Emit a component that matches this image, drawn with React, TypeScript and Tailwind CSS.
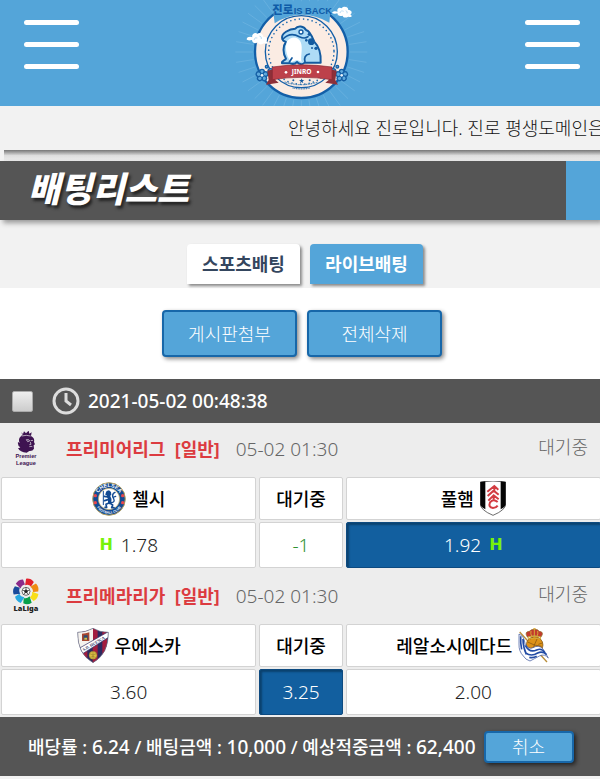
import React from "react";

const rays = Array.from({ length: 40 }, (_, i) => (i * Math.PI) / 20);

function MenuButton() {
  return (
    <button type="button" aria-label="메뉴" className="flex flex-col gap-[17px] mt-5 w-[55px]">
      <span className="w-full h-[5px] rounded-full bg-white" />
      <span className="w-full h-[5px] rounded-full bg-white" />
      <span className="w-full h-[5px] rounded-full bg-white" />
    </button>
  );
}

function Flower({ x, y }: { x: number; y: number }) {
  return (
    <g transform={`translate(${x} ${y})`} fill="#5fa9dc" stroke="#155fa5" strokeWidth="4">
      {[0, 72, 144, 216, 288].map((a) => (
        <circle key={a} cx="0" cy="-11" r="7" transform={`rotate(${a})`} />
      ))}
      <circle r="4" fill="#e8f3fb" stroke="none" />
    </g>
  );
}

function SiteLogo() {
  return (
    <svg width="140" height="106" viewBox="6 0 420 318" role="img" aria-label="진로 IS BACK">
      <g stroke="#8cc6ea" strokeWidth="2" opacity="0.5">
        {rays.map((a) => (
          <line
            key={a}
            x1={214 + Math.cos(a) * 145}
            y1={156 + Math.sin(a) * 145}
            x2={214 + Math.cos(a) * 198}
            y2={156 + Math.sin(a) * 198}
          />
        ))}
      </g>
      <circle cx="214" cy="155" r="139" fill="#fbece3" stroke="#135fa8" strokeWidth="7" />
      <circle cx="214" cy="155" r="108" fill="#fbece3" stroke="#135fa8" strokeWidth="4" />
      <circle cx="214" cy="155" r="98" fill="none" stroke="#1c68ae" strokeWidth="5" strokeLinecap="round" strokeDasharray="0 13" />
      <path d="M126 4h178l-6 64q-86-48-164 2z" fill="#54a5d9" />
      <text x="127" y="42" fontSize="34" fontWeight="900" fill="#0f5ca8" fontFamily="'Noto Sans CJK KR', sans-serif">
        진로
      </text>
      <text x="191" y="42" fontSize="28" fontWeight="bold" fill="#0f5ca8" fontFamily="'Liberation Sans', sans-serif">
        IS BACK
      </text>
      <path
        d="M157 118C150 100 180 86 196 86C203 76 222 78 228 90C238 92 246 108 252 124C262 134 274 154 272 188H224C216 196 206 192 201 186C196 192 186 192 180 190H156C154 182 166 182 168 176C158 160 158 138 168 126C162 124 158 122 157 118Z"
        fill="#aedcf6"
        stroke="#135a9f"
        strokeWidth="6"
        strokeLinejoin="round"
      />
      <path d="M171 124C184 106 206 110 212 126C220 146 210 172 215 186L201 180L184 186C174 178 162 150 171 124Z" fill="#fff" />
      <path
        d="M159 117C176 99 194 102 208 110C218 115 228 115 234 110M238 162C226 164 221 174 225 186M186 174L178 186"
        fill="none"
        stroke="#135a9f"
        strokeWidth="5"
        strokeLinecap="round"
      />
      <circle cx="213" cy="96" r="6" fill="#fff" stroke="#135a9f" strokeWidth="4" />
      <g fill="#135a9f">
        <circle cx="238" cy="103" r="5" />
        <circle cx="244" cy="125" r="10" />
        <circle cx="229" cy="121" r="4" />
        <circle cx="258" cy="145" r="5" />
        <circle cx="246" cy="144" r="3" />
      </g>
      <Flower x={96} y={226} />
      <Flower x={335} y={226} />
      <g fill="#5fa9dc" stroke="#155fa5" strokeWidth="4">
        <circle cx="122" cy="214" r="8" />
        <circle cx="309" cy="214" r="8" />
        <circle cx="110" cy="200" r="4" />
        <circle cx="322" cy="200" r="4" />
      </g>
      <path d="M112 212l24-6v34l10 8-38 6 8-14zM320 212l-24-6v34l-10 8 38 6-8-14z" fill="#8d3039" />
      <path d="M127 201q87-13 179 0v38q-92-14-179 0z" fill="#bd414b" stroke="#8a2733" strokeWidth="2" />
      <text x="215" y="223" textAnchor="middle" fontSize="20" fontWeight="bold" fill="#fff" fontFamily="'Noto Sans', sans-serif">
        JINRO
      </text>
      <circle cx="168" cy="217" r="4" fill="#fff" />
      <circle cx="264" cy="216" r="4" fill="#fff" />
      <path d="M215 235l2 5h6l-5 4 2 6-5-4-5 4 2-6-5-4h6z" fill="#135a9f" />
      <circle cx="190" cy="241" r="3" fill="#135a9f" />
      <circle cx="239" cy="241" r="3" fill="#135a9f" />
      <path d="M164 246q50 16 100 0M188 264q26 5 52 0" fill="none" stroke="#4b82b4" strokeWidth="4" strokeDasharray="3 2" />
      <g fill="#fff">
        <path d="M50 118c0-8 12-9 17-6-3-9 7-16 15-11 8-5 18 1 17 9 10-1 15 7 10 14 9 4 2 9-7 6-8 6-18 3-19-3-8 6-17 1-17-7-6 2-15 2-16-2z" />
        <path d="M306 38c5-6 12-5 17-3-4-8 5-16 12-10 6-8 20-5 20 5 9 0 14 8 6 14 8 4 4 9-6 6-8 5-16 3-17-3-9 3-16-1-16-7-6 2-13 1-16-2z" />
      </g>
      <path d="M72 120q2-10 10-6M88 108q8 1 6 9M330 39q2-9 11-5M347 32q7 2 4 8" fill="none" stroke="#9ccbed" strokeWidth="2" />
    </svg>
  );
}

function PremierLeagueLogo() {
  return (
    <svg width="22" height="36" viewBox="0 0 66 108" role="img" aria-label="Premier League">
      <path
        d="M18 4l6 5 3-8 6 6 8-8 2 9 7-4-2 11q12 6 9 18l3 7-4 3 1 10q-4 8-14 7l-8 5q-20-1-26-14 5 1 7-2-9-6-7-16l5 3q-6-13 5-22l4-3z"
        fill="#3e1351"
      />
      <path
        d="M20 15q14-4 27 0M34 26q9-2 10 4l-6 2zM47 29l7-1M46 33l2 7-5 1M43 47q6-2 9 0"
        fill="none"
        stroke="#eee"
        strokeWidth="2"
      />
      <text x="33" y="82" textAnchor="middle" fontSize="17" fontWeight="bold" fill="#3e1351" fontFamily="'Liberation Sans', sans-serif">
        Premier
      </text>
      <text x="33" y="101" textAnchor="middle" fontSize="17" fontWeight="bold" fill="#3e1351" fontFamily="'Liberation Sans', sans-serif">
        League
      </text>
    </svg>
  );
}

function LaLigaLogo() {
  const colors = ["#e3202b", "#ef8a12", "#f8de18", "#08a04a", "#28a9e1", "#194b9b", "#8b2a8a"];
  return (
    <svg width="28" height="36" viewBox="0 0 84 108" role="img" aria-label="LaLiga">
      <g transform="translate(42 40)">
        {colors.map((color, i) => (
          <path key={color} d="M-9 -37q14-5 25 4l-5 15q-9-5-18 1z" fill={color} transform={`rotate(${i * 51 + 14})`} />
        ))}
        <circle r="12" fill="#fff" stroke="#222" strokeWidth="2" />
        <path d="M0-5l5 3-2 6h-6l-2-6zM0-11v6M10-3l-5 1M6 9L3 4M-6 9l3-5M-10-3l5 1" fill="#222" stroke="#222" strokeWidth="2" />
      </g>
      <text x="42" y="100" textAnchor="middle" fontSize="22" fontWeight="900" fill="#222" fontFamily="'Noto Sans', sans-serif">
        LaLiga
      </text>
    </svg>
  );
}

function ChelseaLogo() {
  return (
    <svg width="34" height="34" viewBox="0 0 102 102" className="shrink-0" aria-hidden="true">
      <defs>
        <path id="chelseaTop" d="M15 51a36 36 0 0 1 72 0" />
        <path id="chelseaBottom" d="M7 51a44 44 0 0 0 88 0" />
      </defs>
      <circle cx="51" cy="51" r="49" fill="#124a93" stroke="#b8a15c" strokeWidth="3" />
      <circle cx="51" cy="51" r="32" fill="#fff" stroke="#b8a15c" strokeWidth="2" />
      <text fontSize="16" fontWeight="bold" fill="#fff" fontFamily="'Liberation Sans', sans-serif" textAnchor="middle">
        <textPath href="#chelseaTop" startOffset="50%">CHELSEA</textPath>
      </text>
      <text fontSize="10" fontWeight="bold" fill="#fff" fontFamily="'Liberation Sans', sans-serif" textAnchor="middle">
        <textPath href="#chelseaBottom" startOffset="50%">FOOTBALL CLUB</textPath>
      </text>
      <g fill="#e6474f">
        <circle cx="10" cy="41" r="5" />
        <circle cx="10" cy="62" r="5" />
        <circle cx="92" cy="41" r="5" />
        <circle cx="92" cy="62" r="5" />
      </g>
      <g fill="none" stroke="#124a93" strokeLinecap="round" strokeLinejoin="round">
        <path d="M49 41Q55 50 53 62" strokeWidth="10" />
        <path d="M47 45L37 43M48 53L38 56M51 63L42 67L44 76H39M55 64L62 69L59 77H66" strokeWidth="5" />
        <path d="M58 62Q70 61 65 50Q59 42 64 34L69 31M66 45L71 43" strokeWidth="4" />
        <path d="M34 28V68" strokeWidth="3" />
      </g>
      <path d="M41 33l3-6 7-2 6 5 1 9-8 5-5-4-5-1z" fill="#124a93" />
    </svg>
  );
}

function FulhamLogo() {
  return (
    <svg width="26" height="35" viewBox="0 0 78 105" className="shrink-0" aria-hidden="true">
      <path d="M1 3q38-6 76 0v66q0 18-38 34Q1 87 1 69z" fill="#fff" stroke="#222" strokeWidth="2" />
      <path d="M1 3l15-2v84Q1 78 1 69zM77 3L62 1v84q15-7 15-16z" fill="#050505" />
      <path d="M22 32l21-17 12 11M43 17v13M23 45l18-16 15 12M25 59l16-16 15 12M41 43v13" fill="none" stroke="#d33c42" strokeWidth="6" />
      <path d="M53 63q-13-11-23 1-6 15 9 17 9 0 14-7" fill="none" stroke="#d33c42" strokeWidth="6" />
    </svg>
  );
}

function HuescaLogo() {
  return (
    <svg width="32" height="35" viewBox="0 0 96 105" className="shrink-0" aria-hidden="true">
      <defs>
        <clipPath id="huescaShield">
          <path d="M2 13q24 0 46-12 20 12 46 12 1 65-46 91Q1 78 2 13z" />
        </clipPath>
      </defs>
      <g clipPath="url(#huescaShield)">
        <rect width="96" height="105" fill="#2c2a60" />
        <path d="M16 0h15v105H16zM47 0h15v105H47zM76 0h14v105H76z" fill="#a31c3e" />
        <path d="M0 0h48v38L8 62 0 40z" fill="#f5f2ed" />
        <path d="M8 60L96 10v17L17 77z" fill="#fff" stroke="#2c2a60" strokeWidth="2" />
        <path d="M15 17q11 0 22-4v26H15z" fill="#a7452f" />
        <path d="M20 22h12v13H20z" fill="#294d73" />
        <path d="M22 29h8v6h-8z" fill="#d9bd42" />
      </g>
      <text x="20" y="69" fontSize="12" fontWeight="bold" fill="#2c2a60" fontFamily="'Liberation Serif', serif" transform="rotate(-30 20 69)">
        S.D. HUESCA
      </text>
      <circle cx="48" cy="82" r="12" fill="#d9bd42" stroke="#6a5720" strokeWidth="1" />
      <path d="M38 77q10 8 20 0M39 88q9-6 18 1M48 71v22" fill="none" stroke="#6a5720" strokeWidth="1" />
      <path d="M2 13q24 0 46-12 20 12 46 12 1 65-46 91Q1 78 2 13z" fill="none" stroke="#6d6f86" strokeWidth="2" />
    </svg>
  );
}

function SociedadLogo() {
  return (
    <svg width="32" height="35" viewBox="0 0 96 105" className="shrink-0" aria-hidden="true">
      <path d="M5 12l82 90" stroke="#b88d38" strokeWidth="4" />
      <circle cx="50" cy="51" r="25" fill="#dd9218" stroke="#7c5010" strokeWidth="2" />
      <path d="M29 42l20 9 10-22M49 51l-7 22M49 51l22 4M36 34l10-8M73 45l-12 4" fill="none" stroke="#7c5010" strokeWidth="2" />
      <path d="M3 18q15 6 18 28 10 20 24 13 18-10 30 4l16 27q-11-14-27-6-16 9-28 15-14-4-20-15Q2 70 3 48z" fill="#fff" stroke="#2d4996" strokeWidth="2" />
      <path d="M8 25q-1 20 3 39M15 33q0 24 10 46M22 52q12 24 34 14 15-7 25 8M23 75q17 12 36 0 15-7 27 5M34 88q11 3 22-3" fill="none" stroke="#224ba4" strokeWidth="5" />
      <path d="M28 27q-10-16 6-17 6-7 15-6 10-1 15 6 16 2 5 17-21-7-41 0z" fill="#c33a2e" stroke="#8c6b22" strokeWidth="2" />
      <path d="M30 27q20-6 38 0l-1 6q-18-5-36 0zM49 2v24M39 9q-2 9 2 16M59 9q2 9-2 16M46 2h7" fill="none" stroke="#d6a938" strokeWidth="3" />
    </svg>
  );
}

type Odds = { value: string; mark?: "left" | "right"; selected?: boolean; negative?: boolean };

type Match = {
  league: string;
  leagueLogo: React.ReactNode;
  home: string;
  homeLogo: React.ReactNode;
  away: string;
  awayLogo: React.ReactNode;
  odds: Odds[];
};

const matches: Match[] = [
  {
    league: "프리미어리그",
    leagueLogo: <PremierLeagueLogo />,
    home: "첼시",
    homeLogo: <ChelseaLogo />,
    away: "풀햄",
    awayLogo: <FulhamLogo />,
    odds: [
      { value: "1.78", mark: "left" },
      { value: "-1", negative: true },
      { value: "1.92", mark: "right", selected: true },
    ],
  },
  {
    league: "프리메라리가",
    leagueLogo: <LaLigaLogo />,
    home: "우에스카",
    homeLogo: <HuescaLogo />,
    away: "레알소시에다드",
    awayLogo: <SociedadLogo />,
    odds: [{ value: "3.60" }, { value: "3.25", selected: true }, { value: "2.00" }],
  },
];

function Handicap() {
  return <b className="font-['DejaVu_Sans',sans-serif] font-bold text-base leading-none text-[#76f20a]">H</b>;
}

function OddsCell({ odds }: { odds: Odds }) {
  const look = odds.selected
    ? "bg-[#125f9f] text-white border-[#0d4a80] shadow-[inset_2px_2px_2px_#0b426f]"
    : odds.negative
      ? "bg-white text-[#2f9232] border-[#d3d3d3]"
      : "bg-white text-[#222] border-[#d3d3d3]";
  return (
    <td className="h-[46px] p-0">
      <button type="button" className={`flex items-center justify-center gap-2 w-full h-[46px] border rounded-xs text-[19px] font-light ${look}`}>
        {odds.mark === "left" && <Handicap />}
        {odds.value}
        {odds.mark === "right" && <Handicap />}
      </button>
    </td>
  );
}

function MatchCard({ match }: { match: Match }) {
  const team = "h-[43px] p-0 bg-white border border-[#d3d3d3] rounded-xs font-medium text-black";
  return (
    <section className="bg-[#ededed] overflow-hidden">
      <div className="flex items-center h-[52px] pr-3 text-[#666] font-light">
        <div className="flex justify-center w-[52px] mr-[14px]">{match.leagueLogo}</div>
        <h3 className="font-bold text-[#dc3b40] whitespace-pre">{match.league}  [일반]</h3>
        <time className="ml-4 text-[19px]">05-02 01:30</time>
        <span className="ml-auto self-start pt-3">대기중</span>
      </div>
      <div className="-ml-[2px] -mr-1">
        <table className="w-full table-fixed border-separate border-spacing-x-[3px] border-spacing-y-[2px]">
          <colgroup>
            <col className="w-[43%]" />
            <col className="w-[14%]" />
            <col />
          </colgroup>
          <thead>
            <tr>
              <th className={team}>
                <div className="flex items-center justify-center gap-[6px]">
                  {match.homeLogo}
                  {match.home}
                </div>
              </th>
              <th className={team}>대기중</th>
              <th className={team}>
                <div className="flex items-center justify-center gap-[6px]">
                  {match.away}
                  {match.awayLogo}
                </div>
              </th>
            </tr>
          </thead>
          <tbody>
            <tr>
              {match.odds.map((odds) => (
                <OddsCell key={odds.value} odds={odds} />
              ))}
            </tr>
          </tbody>
        </table>
      </div>
    </section>
  );
}

function App() {
  const action = "h-[47px] w-[135px] rounded-sm border-2 border-[#1767a9] bg-[#54a5d9] font-light text-white shadow-[2px_2px_4px_#888]";
  return (
    <div className="min-h-screen bg-[#f2f2f2] overflow-hidden text-[18px] leading-6 font-['Noto_Sans','Noto_Sans_CJK_KR',sans-serif]">
      <header className="flex justify-between items-start h-[106px] pl-6 pr-5 bg-[#54a5d9]">
        <MenuButton />
        <SiteLogo />
        <MenuButton />
      </header>
      <div className="h-[44px] pl-[48%] pt-[10px] overflow-hidden whitespace-nowrap font-light text-[#111]">
        안녕하세요 진로입니다. 진로 평생도메인은
      </div>
      <div className="h-[11px] ml-1 bg-linear-to-b from-[#777] via-[#ddd] to-[#eee]" />
      <div className="flex justify-between h-[59px] bg-[#555] shadow-[3px_3px_5px_#999]">
        <h1 className="pl-7 pt-[10px] text-[35px] leading-9 font-black italic text-white [text-shadow:2px_3px_3px_#222]">배팅리스트</h1>
        <div className="w-[34px] bg-[#54a5d9]" />
      </div>
      <nav className="flex justify-center gap-[10px] h-[68px] pt-6 pl-[10px]">
        <button type="button" className="h-10 w-[113px] rounded-t-sm bg-white font-bold text-[#34465e] shadow-[2px_2px_3px_#888]">
          스포츠배팅
        </button>
        <button type="button" className="h-10 w-[113px] rounded-t-sm bg-[#54a5d9] font-bold text-white shadow-[2px_2px_3px_#888]">
          라이브배팅
        </button>
      </nav>
      <div className="flex justify-center gap-[10px] h-[91px] pt-[22px] pl-1 bg-white">
        <button type="button" className={action}>
          게시판첨부
        </button>
        <button type="button" className={action}>
          전체삭제
        </button>
      </div>
      <main>
        <div className="flex items-center h-[44px] pl-3 bg-[#555] text-white text-[19px] font-medium">
          <input
            id="slip"
            type="checkbox"
            className="appearance-none size-[21px] rounded-xs border border-[#aaa] bg-linear-to-b from-[#eee] to-[#ccc] checked:bg-[#54a5d9]"
          />
          <label htmlFor="slip" className="flex items-center gap-2 ml-[19px]">
            <svg width="28" height="28" viewBox="0 0 28 28" fill="none" stroke="#ddd" strokeWidth="3">
              <circle cx="14" cy="14" r="12" />
              <path d="M14 6v8l5 4" />
            </svg>
            2021-05-02 00:48:38
          </label>
        </div>
        {matches.map((match) => (
          <MatchCard key={match.league} match={match} />
        ))}
      </main>
      <footer className="flex items-center gap-2 h-[59px] pl-7 pr-2 bg-[#555] text-white font-medium whitespace-nowrap">
        <p>
          배당률 : <span className="text-[19px]">6.24</span> / 배팅금액 : <span className="text-[19px]">10,000</span> / 예상적중금액 :{" "}
          <span className="text-[19px]">62,400</span>
        </p>
        <button type="button" className="h-8 w-[90px] rounded-sm border-2 border-[#1767a9] bg-[#54a5d9] font-light shadow-[2px_2px_4px_#222]">
          취소
        </button>
      </footer>
    </div>
  );
}

export default App;
